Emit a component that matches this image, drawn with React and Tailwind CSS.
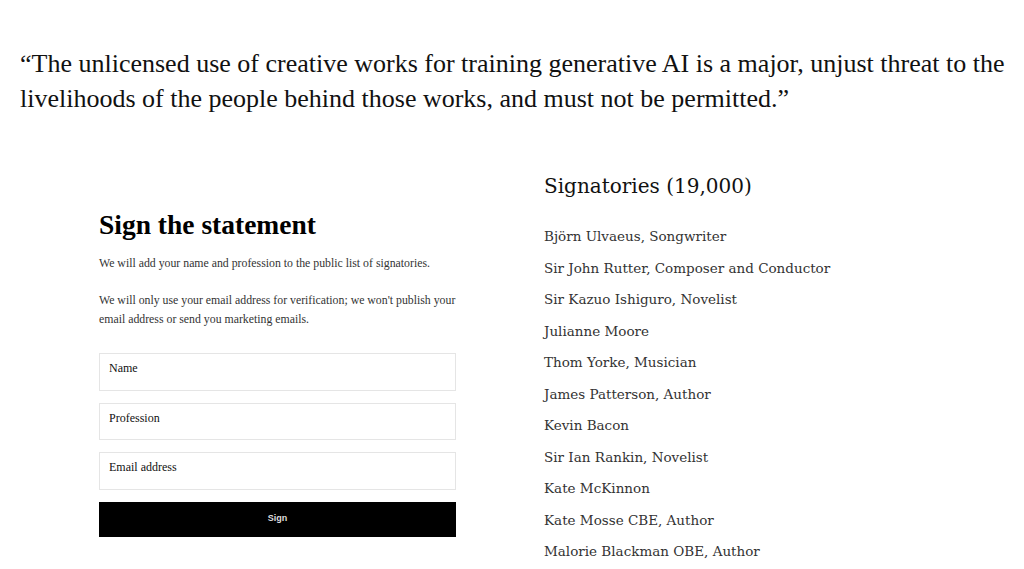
const signatories = [
  'Björn Ulvaeus, Songwriter',
  'Sir John Rutter, Composer and Conductor',
  'Sir Kazuo Ishiguro, Novelist',
  'Julianne Moore',
  'Thom Yorke, Musician',
  'James Patterson, Author',
  'Kevin Bacon',
  'Sir Ian Rankin, Novelist',
  'Kate McKinnon',
  'Kate Mosse CBE, Author',
  'Malorie Blackman OBE, Author',
];

const serif = "font-['Liberation_Serif','Times_New_Roman',serif]";
const wideSerif = "font-['DejaVu_Serif',Georgia,serif]";

export default function App() {
  return (
    <div className={`min-h-screen bg-white text-[#111] ${serif}`}>
      {/* Statement */}
      <blockquote className="pl-5 pt-[46px] text-[26px] leading-[35px] whitespace-nowrap text-[#111]">
        “The unlicensed use of creative works for training generative AI is a major, unjust threat to the
        <br />
        livelihoods of the people behind those works, and must not be permitted.”
      </blockquote>

      <div className="flex pt-[54px]">
        {/* Form */}
        <div className="ml-[99px] w-[357px] pt-[38px]">
          <h2 className="text-[27.5px] font-bold leading-[34px] text-black">Sign the statement</h2>
          <p className="mt-[12px] text-[11.8px] leading-[19px] text-[#333]">
            We will add your name and profession to the public list of signatories.
          </p>
          <p className="mt-[18px] text-[11.8px] leading-[19px] text-[#333]">
            We will only use your email address for verification; we won't publish your email address or send you marketing emails.
          </p>
          <div className="mt-[24px] flex flex-col gap-3">
            {['Name', 'Profession', 'Email address'].map((label) => (
              <input
                key={label}
                placeholder={label}
                className="h-[37.5px] w-full border border-[#e5e5e5] px-[9px] pb-[6px] text-[12px] text-black placeholder:text-[#111] outline-none"
              />
            ))}
            <button className="h-[35px] w-full bg-black font-['Liberation_Sans',Arial,sans-serif] text-[9px] font-bold text-[#ddd]">
              Sign
            </button>
          </div>
        </div>

        {/* Signatories */}
        <div className={`ml-[88px] ${wideSerif}`}>
          <h2 className="text-[20px] leading-[32px] text-[#111]">Signatories (19,000)</h2>
          <ul className="mt-[24px] flex flex-col">
            {signatories.map((name) => (
              <li key={name} className="h-[31.5px] text-[13.5px] leading-[20px] text-[#333]">
                {name}
              </li>
            ))}
          </ul>
        </div>
      </div>
    </div>
  );
}
